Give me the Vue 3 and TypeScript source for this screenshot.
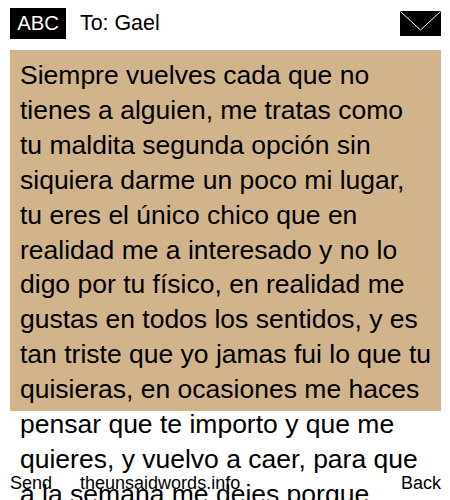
<script setup lang="ts">
const lines: string[] = [
  'Siempre vuelves cada que no',
  'tienes a alguien, me tratas como',
  'tu maldita segunda opción sin',
  'siquiera darme un poco mi lugar,',
  'tu eres el único chico que en',
  'realidad me a interesado y no lo',
  'digo por tu físico, en realidad me',
  'gustas en todos los sentidos, y es',
  'tan triste que yo jamas fui lo que tu',
  'quisieras, en ocasiones me haces',
  'pensar que te importo y que me',
  'quieres, y vuelvo a caer, para que',
  'a la semana me dejes porque',
]
</script>

<template>
  <div class="phone">
    <header class="top">
      <div class="left">
        <span class="abc">ABC</span>
        <span class="to">To: Gael</span>
      </div>
      <svg class="env" width="41" height="25" viewBox="0 0 41 25" aria-hidden="true">
        <rect width="41" height="25" fill="#000" />
        <path d="M0.5 0.5 L20.5 19 L40.5 0.5" fill="none" stroke="#fff" stroke-width="1" />
      </svg>
    </header>
    <main class="msg">
      <div v-for="(l, i) in lines" :key="i" class="line">{{ l }}</div>
    </main>
    <footer class="foot">
      <div class="foot-left">
        <span>Send</span>
        <span>theunsaidwords.info</span>
      </div>
      <span>Back</span>
    </footer>
  </div>
</template>

<style>
html, body { margin: 0; padding: 0; background: #fff; }
</style>

<style scoped>
.phone {
  position: relative;
  width: 450px;
  height: 500px;
  overflow: hidden;
  box-sizing: border-box;
  padding: 8px 9px 0 10px;
  font-family: "Liberation Sans", Arial, sans-serif;
  color: #000;
  background: #fff;
}
.top {
  display: flex;
  justify-content: space-between;
  align-items: center;
  height: 31px;
  margin-bottom: 11px;
}
.left {
  display: flex;
  align-items: center;
  gap: 14px;
}
.abc {
  width: 56px;
  height: 31px;
  line-height: 31px;
  background: #000;
  color: #fff;
  font-size: 20.3px;
  text-align: center;
}
.to {
  font-size: 21.4px;
}
.env {
  display: block;
}
.msg {
  box-sizing: border-box;
  height: 361px;
  background: #d2b48c;
  padding: 8px 10px;
  font-size: 26.5px;
  line-height: 34.9px;
  white-space: nowrap;
}
.foot {
  position: absolute;
  left: 10px;
  right: 9px;
  top: 473px;
  display: flex;
  justify-content: space-between;
  font-size: 18px;
  line-height: 21px;
}
.foot-left {
  display: flex;
  gap: 28px;
}
</style>
